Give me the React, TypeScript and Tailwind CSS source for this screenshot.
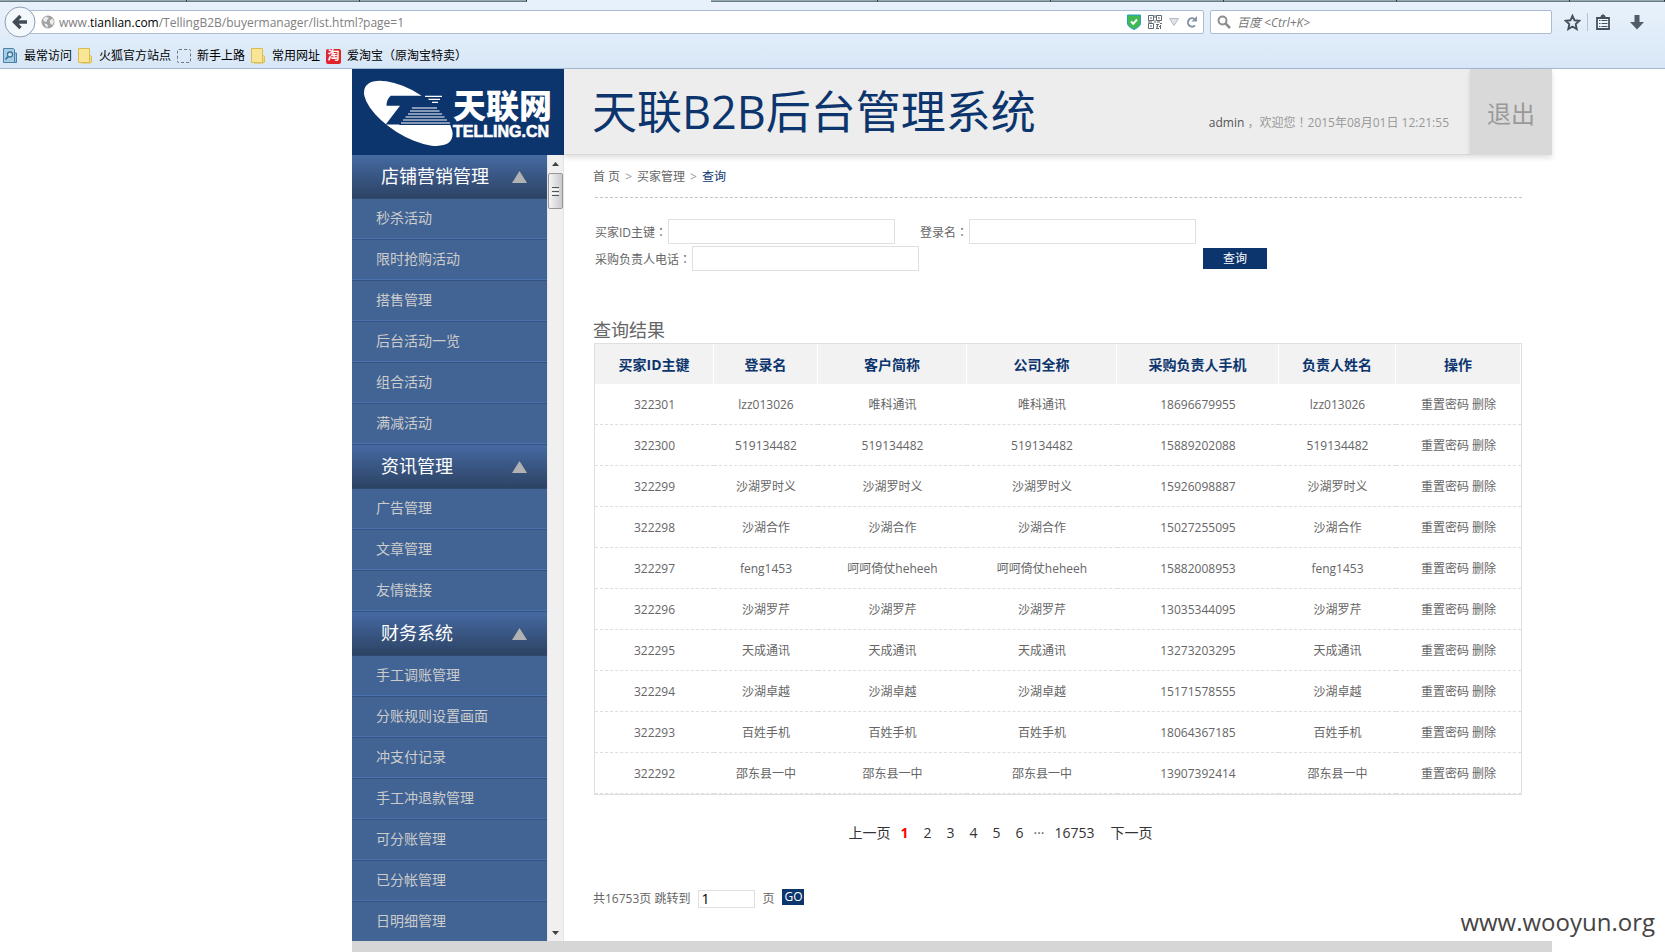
import clsx from "clsx";
import type { ReactNode } from "react";

type MenuSection = {
  title: string;
  items: string[];
};

const menu: MenuSection[] = [
  {
    title: "店铺营销管理",
    items: ["秒杀活动", "限时抢购活动", "搭售管理", "后台活动一览", "组合活动", "满减活动"],
  },
  { title: "资讯管理", items: ["广告管理", "文章管理", "友情链接"] },
  {
    title: "财务系统",
    items: [
      "手工调账管理",
      "分账规则设置画面",
      "冲支付记录",
      "手工冲退款管理",
      "可分账管理",
      "已分帐管理",
      "日明细管理",
    ],
  },
];

const columns = [
  { label: "买家ID主键", width: "w-[119px]" },
  { label: "登录名", width: "w-[104px]" },
  { label: "客户简称", width: "w-[149px]" },
  { label: "公司全称", width: "w-[150px]" },
  { label: "采购负责人手机", width: "w-[162px]" },
  { label: "负责人姓名", width: "w-[117px]" },
  { label: "操作", width: "w-[125px]" },
];

const buyers = [
  { id: "322301", login: "lzz013026", name: "唯科通讯", phone: "18696679955" },
  { id: "322300", login: "519134482", name: "519134482", phone: "15889202088" },
  { id: "322299", login: "沙湖罗时义", name: "沙湖罗时义", phone: "15926098887" },
  { id: "322298", login: "沙湖合作", name: "沙湖合作", phone: "15027255095" },
  { id: "322297", login: "feng1453", name: "呵呵倚仗heheeh", phone: "15882008953" },
  { id: "322296", login: "沙湖罗芹", name: "沙湖罗芹", phone: "13035344095" },
  { id: "322295", login: "天成通讯", name: "天成通讯", phone: "13273203295" },
  { id: "322294", login: "沙湖卓越", name: "沙湖卓越", phone: "15171578555" },
  { id: "322293", login: "百姓手机", name: "百姓手机", phone: "18064367185" },
  { id: "322292", login: "邵东县一中", name: "邵东县一中", phone: "13907392414" },
];

function FolderIcon() {
  return (
    <svg width="15" height="16" viewBox="0 0 15 16" aria-hidden>
      <path d="M10 7.500h2.500l1 1V14l-1 1H3V14z" fill="#f3da80" stroke="#dcbb50" />
      <path d="M.5.500h11v14H.5z" fill="#f8e596" stroke="#dcbb50" />
    </svg>
  );
}

function MostVisitedIcon() {
  return (
    <svg width="15" height="16" viewBox="0 0 15 16" aria-hidden>
      <path d="M11 5h2.500v9.500H10" fill="#9fc4dc" stroke="#4b83a8" />
      <path d="M.5.5h10l1 1v13H.5z" fill="#a9cde4" stroke="#4b83a8" />
      <circle cx="7" cy="6.500" r="2.500" fill="#d9ecf7" stroke="#3a749c" strokeWidth="1.300" />
      <path d="M5 8.500 2.500 11.500" stroke="#3a749c" strokeWidth="1.800" />
    </svg>
  );
}

function TaobaoIcon() {
  return (
    <span className="flex size-[15px] items-center justify-center rounded-xs bg-[#e1242b] text-xs leading-none font-bold text-white">
      淘
    </span>
  );
}

function Bookmark({ icon, label }: { icon: ReactNode; label: string }) {
  return (
    <a href="#" className="flex items-center gap-1.5">
      {icon}
      {label}
    </a>
  );
}

const tabWidths = [
  "w-[187px]",
  "w-[173px]",
  "w-[167px]",
  "w-[184px]",
  "w-[167px]",
  "w-[173px]",
  "w-[173px]",
  "w-[173px]",
  "w-[173px]",
  "flex-1",
];
const activeTab = 3;

function TabStrip() {
  return (
    <div className="flex h-0.5">
      {tabWidths.map((width, index) => (
        <div
          key={index}
          className={clsx(
            width,
            index === activeTab
              ? "bg-[#e7f0fa]"
              : "border-r border-b border-r-[#28323a] border-b-[#6b7b84] bg-[#93a7b1]",
          )}
        />
      ))}
    </div>
  );
}

function BrowserBar() {
  return (
    <div className="flex h-[69px] shrink-0 flex-col border-b border-[#a3b7d1] bg-linear-to-b from-[#e9f2fb] to-[#d8e7f7] text-xs text-black">
      <TabStrip />
      <div className="flex h-10 items-center pl-1">
        <button type="button" aria-label="后退" className="z-10 shrink-0">
          <svg width="32" height="32" viewBox="0 0 32 32">
            <circle cx="16" cy="16" r="15" fill="#f3f8fd" stroke="#8d9db1" />
            <path
              d="M16.500 10 10.500 16l6 6M11 16h12"
              fill="none"
              stroke="#434c56"
              strokeWidth="3.400"
            />
          </svg>
        </button>
        <div className="-ml-1.5 flex h-6 min-w-0 flex-1 items-center rounded-r-xs border border-[#aabdd4] bg-white pr-1.5 pl-2.5">
          <svg width="14" height="14" viewBox="0 0 14 14" aria-hidden>
            <circle cx="7" cy="7" r="6.500" fill="#a2a2a2" />
            <path
              d="M2 4 5 1.500 8 3 6 5 5.500 7 3 6.500zM8.500 5.500l3-2 1.500 3L11.500 10l-2-1zM3 8.500l3 .5 1 2-1 2z"
              fill="#ececec"
            />
          </svg>
          <span role="textbox" aria-label="网址" className="ml-1 flex-1 pt-0.5 text-[#808080]">
            www.<span className="text-black">tianlian.com</span>
            /TellingB2B/buyermanager/list.html?page=1
          </span>
          <div className="flex items-center gap-[7px]">
            <svg width="14" height="16" viewBox="0 0 14 16" aria-hidden>
              <path
                d="M.5 1h13v8c0 3-3 5-6.500 6.500C3.500 14 .5 12 .5 9z"
                fill="#3fb950"
                stroke="#2a9bd0"
              />
              <path d="m4 7.500 2.200 2.300L10 5.500" fill="none" stroke="#fff" strokeWidth="2" />
            </svg>
            <svg width="14" height="14" viewBox="0 0 14 14" fill="none" stroke="#5f6770" aria-hidden>
              <path d="M.5.5h5v5h-5zM8.500.5h5v5h-5zM.5 8.500h5v5h-5z" />
              <path d="M2 3h2M10 3h2M2 11h2M7 0v3M7 5v3M0 7h4M9 7h3M8 9.500h3M12 8.500h2M8 12h2M11 11.500h2M9.500 10v2M12.500 10v4M8 13.500h3" />
            </svg>
            <svg width="10" height="8" viewBox="0 0 10 8" aria-hidden>
              <path d="M.5.5h9L5 7.500z" fill="#dfe3e8" stroke="#b2bac4" />
            </svg>
            <button type="button" aria-label="刷新">
              <svg width="11" height="12" viewBox="0 0 11 12" fill="none">
                <path d="M9 9.500A4.200 4.200 0 1 1 8.500 3" stroke="#8594a8" strokeWidth="2" />
                <path d="M11 0v5.500H5.500z" fill="#8594a8" />
              </svg>
            </button>
          </div>
        </div>
        <label className="ml-1.5 flex h-6 w-[342px] items-center gap-1.5 rounded-xs border border-[#aabdd4] bg-white pl-1.5">
          <svg width="14" height="14" viewBox="0 0 14 14" fill="none" stroke="#8e8e8e" aria-hidden>
            <circle cx="5.500" cy="5.500" r="4" strokeWidth="2" />
            <path d="m8.500 8.500 4.500 4.500" strokeWidth="2.500" />
          </svg>
          <input
            aria-label="搜索"
            placeholder="百度 <Ctrl+K>"
            className="min-w-0 flex-1 pt-0.5 italic outline-none placeholder:text-[#777]"
          />
        </label>
        <div className="flex w-[113px] items-center pl-3">
          <button type="button" aria-label="收藏">
            <svg width="17" height="17" viewBox="0 0 17 17">
              <path
                d="m8.500 1.800 2 4.500 4.800.5-3.600 3.300 1 4.900-4.200-2.500L4.300 15l1-4.900L1.700 6.800l4.800-.5z"
                fill="none"
                stroke="#46505c"
                strokeWidth="1.900"
              />
            </svg>
          </button>
          <span className="ml-1.5 h-[18px] w-px bg-[#b3c3d6]" />
          <button type="button" aria-label="书签" className="ml-2">
            <svg width="14" height="16" viewBox="0 0 14 16">
              <path d="M1 4h12v11H1z" fill="#eef4fb" stroke="#46505c" strokeWidth="1.800" />
              <path d="M4.500 3.500 6 1h2l1.500 2.500" fill="#46505c" stroke="#46505c" />
              <path
                d="M3 6.500h1.500M3 9.500h1.500M3 12.500h1.500M5.500 6.500h6M5.500 9.500h6M5.500 12.500h6"
                stroke="#46505c"
              />
            </svg>
          </button>
          <button type="button" aria-label="下载" className="ml-5">
            <svg width="14" height="15" viewBox="0 0 14 15">
              <path d="M4.500 0h5v7H14l-7 7.500L0 7h4.500z" fill="#515c68" />
            </svg>
          </button>
        </div>
      </div>
      <nav className="flex flex-1 items-center gap-1.5 pt-0.5 pl-[3px]">
        <Bookmark icon={<MostVisitedIcon />} label="最常访问" />
        <Bookmark icon={<FolderIcon />} label="火狐官方站点" />
        <Bookmark
          icon={<span className="size-[14px] rounded-xs border border-dashed border-[#6d7680]" />}
          label="新手上路"
        />
        <Bookmark icon={<FolderIcon />} label="常用网址" />
        <Bookmark icon={<TaobaoIcon />} label="爱淘宝（原淘宝特卖）" />
      </nav>
    </div>
  );
}

function Logo() {
  return (
    <svg viewBox="0 0 212 86" className="h-full w-[212px] shrink-0 bg-[#0c356e]" aria-label="天联网">
      <ellipse
        cx="56.300"
        cy="44.300"
        rx="50.400"
        ry="22"
        transform="rotate(32 56.300 44.300)"
        fill="#fff"
      />
      <path
        d="M38.700 26.700H71c5 2 10 5.500 12.700 10H62L49 55.500H33.700L48 36.700H34.500c0-4 1-7 4.200-10z"
        fill="#0c356e"
      />
      <path d="M62 36h22l16.500 20H47z" fill="#0c356e" />
      <g stroke="#fff" strokeWidth="1.200">
        <path d="M73 27.300h17M76.500 30.300h11.500M80 33.300h6" />
        <path d="M60 39h25M58 42h29.500M56 45h34M53.500 48h39M51 51h44M49 54h49" />
      </g>
      <text
        x="101"
        y="49"
        fill="#fff"
        fontSize="33"
        fontWeight="900"
        fontFamily="'Liberation Sans', 'Noto Sans CJK SC', sans-serif"
      >
        天联网
      </text>
      <text
        x="101"
        y="68"
        fill="#fff"
        fontSize="16"
        fontWeight="700"
        fontFamily="'Liberation Sans', sans-serif"
        stroke="#fff"
        strokeWidth="0.600"
      >
        TELLING.CN
      </text>
    </svg>
  );
}

function SiteHeader() {
  return (
    <header className="relative z-10 flex h-[86px] shrink-0 bg-[#ededed]">
      <Logo />
      <div className="flex flex-1 items-center justify-between border-b border-[#d9d9d9] pr-[21px] pl-7 shadow-[0_3px_5px_rgba(0,0,0,0.12)]">
        <h1 className="text-[45px] leading-none text-[#0c356e]">天联B2B后台管理系统</h1>
        <p className="mt-[22px] text-xs text-[#999]">
          <span className="text-[#555]">admin</span> ，欢迎您
          <span className="font-['Noto_Sans_CJK_TC',sans-serif]">！</span>2015年08月01日 12:21:55
        </p>
      </div>
      <a
        href="#logout"
        className="flex w-[82px] items-center justify-center bg-[#d9d9d9] pt-1 text-2xl text-[#999] shadow-[0_3px_5px_rgba(0,0,0,0.12)]"
      >
        退出
      </a>
    </header>
  );
}

function Sidebar() {
  return (
    <aside className="flex w-[212px] shrink-0 overflow-hidden">
      <nav className="flex-1 bg-[#426494]">
        {menu.map((section) => (
          <section key={section.title}>
            <h2 className="flex h-11 items-center justify-between border-b border-[#2f4a70] bg-linear-to-b from-[#456aa3] to-[#2d4364] pr-5 pb-0.5 pl-[29px] text-lg text-white">
              {section.title}
              <svg width="15" height="12" viewBox="0 0 15 12" className="mt-0.5" aria-hidden>
                <path d="M7.500 0 15 12H0z" fill="#b2b2b2" />
              </svg>
            </h2>
            <ul>
              {section.items.map((item) => (
                <li key={item} className="border-b border-[#34527d]">
                  <a
                    href="#"
                    className="flex h-10 items-center border-b border-[#4a72b2] pb-0.5 pl-6 text-sm text-[#ccc]"
                  >
                    {item}
                  </a>
                </li>
              ))}
            </ul>
          </section>
        ))}
      </nav>
      <div className="flex w-[17px] flex-col items-center justify-between border-x border-[#e4e4e4] bg-[#f0f0f0]">
        <div className="flex flex-col items-center">
          <svg width="7" height="4" viewBox="0 0 7 4" className="my-[7px]" aria-hidden>
            <path d="M3.500 0 7 4H0z" fill="#404040" />
          </svg>
          <div className="flex h-9 w-[15px] flex-col items-center justify-center gap-px rounded-xs border border-[#979797] bg-linear-to-r from-[#f5f5f5] to-[#c9c9cf]">
            <span className="h-px w-[7px] bg-[#555]" />
            <span className="h-px w-[7px] bg-white" />
            <span className="h-px w-[7px] bg-[#555]" />
            <span className="h-px w-[7px] bg-white" />
            <span className="h-px w-[7px] bg-[#555]" />
          </div>
        </div>
        <svg width="7" height="4" viewBox="0 0 7 4" className="mb-1.5" aria-hidden>
          <path d="M0 0h7L3.500 4z" fill="#404040" />
        </svg>
      </div>
    </aside>
  );
}

function Field({ id, label }: { id: string; label: string }) {
  return (
    <div className="flex items-center">
      <label htmlFor={id} className="pt-0.5">
        {label}
        <span className="font-['Noto_Sans_CJK_TC',sans-serif]">：</span>
      </label>
      <input id={id} className="ml-px h-[25px] w-[227px] border border-[#e0e0e0] bg-white px-1" />
    </div>
  );
}

function SearchForm() {
  return (
    <form className="mt-[21px] flex flex-col gap-0.5 pl-0.5">
      <div className="flex gap-[25px]">
        <Field id="buyer-id" label="买家ID主键" />
        <Field id="login-name" label="登录名" />
      </div>
      <div className="flex items-center">
        <Field id="buyer-phone" label="采购负责人电话" />
        <button type="button" className="ml-[284px] h-[21px] w-16 bg-[#0c356e] text-white">
          查询
        </button>
      </div>
    </form>
  );
}

function BuyerTable() {
  return (
    <table className="ml-px w-[calc(100%-1px)] table-fixed border-separate border-spacing-0 border border-[#dfdfdf] text-center">
      <thead>
        <tr className="h-10">
          {columns.map((column) => (
            <th
              key={column.label}
              className={clsx(
                "border-r border-white bg-[#f2f2f2] pt-0.5 text-sm font-bold text-[#0c356e]",
                column.width,
              )}
            >
              {column.label}
            </th>
          ))}
        </tr>
      </thead>
      <tbody>
        {buyers.map((buyer) => (
          <tr
            key={buyer.id}
            className="h-[41px] *:border-b *:border-dashed *:border-[#dfdfdf] *:pt-0.5"
          >
            <td>{buyer.id}</td>
            <td>{buyer.login}</td>
            <td>{buyer.name}</td>
            <td>{buyer.name}</td>
            <td>{buyer.phone}</td>
            <td>{buyer.login}</td>
            <td>
              <a href="#">重置密码</a> <a href="#">删除</a>
            </td>
          </tr>
        ))}
      </tbody>
    </table>
  );
}

function Pagination() {
  return (
    <nav className="mt-7 flex items-center justify-center pr-[114px] text-sm text-[#333]">
      <a href="#">上一页</a>
      <a href="#" className="ml-2.5 font-bold text-[#f00]">
        1
      </a>
      {["2", "3", "4", "5", "6"].map((page) => (
        <a key={page} href="#" className="ml-[15px]">
          {page}
        </a>
      ))}
      <span className="ml-2.5 text-sm text-[#666]">···</span>
      <a href="#" className="ml-2.5">
        16753
      </a>
      <a href="#" className="ml-4">
        下一页
      </a>
    </nav>
  );
}

function PageJump() {
  return (
    <form className="mt-[46px] flex items-center">
      <label htmlFor="jump-page">共16753页 跳转到</label>
      <input
        id="jump-page"
        defaultValue="1"
        className="mr-[7px] ml-2 h-[18px] w-[57px] border border-[#e0e0e0] px-0.5 text-sm text-black"
      />
      页
      <button type="button" className="mb-1 ml-2 h-4 w-[22px] bg-[#0c356e] leading-4 text-white">
        GO
      </button>
    </form>
  );
}

export default function App() {
  return (
    <div className="relative flex h-screen flex-col overflow-hidden bg-white font-['Open_Sans','Noto_Sans_CJK_SC',sans-serif] text-xs text-[#666]">
      <BrowserBar />
      <div className="mr-[113px] ml-[352px] flex min-h-0 flex-1 flex-col">
        <SiteHeader />
        <div className="flex min-h-0 flex-1">
          <Sidebar />
          <main className="min-w-0 flex-1 pr-[30px] pl-[29px]">
            <p className="flex gap-[5px] pt-3.5 pb-3">
              <a href="#">首 页</a>
              <span className="text-[#999]">&gt;</span>
              <a href="#">买家管理</a>
              <span className="text-[#999]">&gt;</span>
              <span className="text-[#0c356e]">查询</span>
            </p>
            <hr className="ml-0.5 border-dashed border-[#c4c4c4]" />
            <SearchForm />
            <h2 className="mt-[46px] text-lg leading-[26px]">查询结果</h2>
            <BuyerTable />
            <Pagination />
            <PageJump />
          </main>
        </div>
        <footer className="h-[11px] shrink-0 bg-[#d6d6d6]" />
      </div>
      <p className="absolute right-2.5 bottom-3.5 text-2xl text-[#444]">www.wooyun.org</p>
    </div>
  );
}
